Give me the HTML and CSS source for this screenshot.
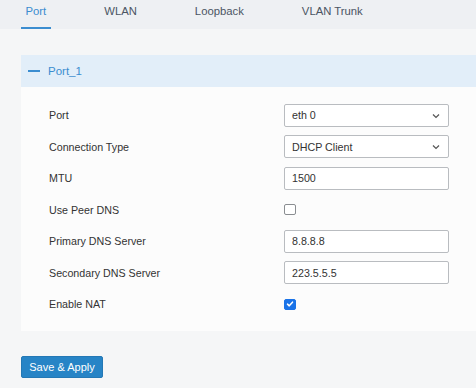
FILE: index.html
```html
<!DOCTYPE html>
<html>
<head>
<meta charset="utf-8">
<link rel="stylesheet" href="styles.css">
</head>
<body>
<nav class="tabs">
  <a class="tab active">Port</a>
  <a class="tab">WLAN</a>
  <a class="tab">Loopback</a>
  <a class="tab">VLAN Trunk</a>
</nav>
<main class="content">
  <section class="panel">
    <header class="panel-head">
      <span class="minus"></span>
      <span class="panel-title">Port_1</span>
    </header>
    <div class="panel-body">
      <div class="row">
        <label class="label">Port</label>
        <div class="field select">
          <span class="value">eth 0</span>
          <svg class="chev" width="8" height="6" viewBox="0 0 8 6"><path d="M1 1.5 L4 4.5 L7 1.5" fill="none" stroke="#555" stroke-width="1.2"/></svg>
        </div>
      </div>
      <div class="row">
        <label class="label">Connection Type</label>
        <div class="field select">
          <span class="value">DHCP Client</span>
          <svg class="chev" width="8" height="6" viewBox="0 0 8 6"><path d="M1 1.5 L4 4.5 L7 1.5" fill="none" stroke="#555" stroke-width="1.2"/></svg>
        </div>
      </div>
      <div class="row">
        <label class="label">MTU</label>
        <div class="field"><span class="value">1500</span></div>
      </div>
      <div class="row">
        <label class="label">Use Peer DNS</label>
        <span class="check"></span>
      </div>
      <div class="row">
        <label class="label">Primary DNS Server</label>
        <div class="field"><span class="value">8.8.8.8</span></div>
      </div>
      <div class="row">
        <label class="label">Secondary DNS Server</label>
        <div class="field"><span class="value">223.5.5.5</span></div>
      </div>
      <div class="row">
        <label class="label">Enable NAT</label>
        <span class="check checked"><svg width="12" height="12" viewBox="0 0 12 12"><path d="M3 6.2 L5.1 8.2 L9 3.8" fill="none" stroke="#fff" stroke-width="1.8" stroke-linecap="round" stroke-linejoin="round"/></svg></span>
      </div>
    </div>
  </section>
  <button class="btn">Save &amp; Apply</button>
</main>
</body>
</html>
```

FILE: styles.css
```css
* { box-sizing: border-box; }
html, body {
  margin: 0;
  padding: 0;
  background: #f5f6f7;
  font-family: "Liberation Sans", Arial, sans-serif;
  color: #333;
  overflow: hidden;
}
.tabs {
  display: flex;
  gap: 49px;
  height: 29px;
  padding-left: 21px;
  background: #eef0f3;
}
.tab {
  display: block;
  padding: 4px 4.5px 0;
  font-size: 11.3px;
  line-height: 15px;
  color: #4b5563;
  border-bottom: 2px solid transparent;
}
.tab.active {
  color: #3b8dd0;
  border-bottom-color: #3b8dd0;
}
.content {
  padding: 26px 0 0 21px;
}
.panel {
  background: #fcfcfc;
  margin-right: -10px;
}
.panel-head {
  display: flex;
  align-items: center;
  height: 32px;
  padding-left: 7px;
  background: #e2eef9;
}
.minus {
  width: 12px;
  height: 2px;
  background: #3b8dd0;
  margin-right: 8px;
}
.panel-title {
  font-size: 11.5px;
  color: #3b8dd0;
}
.panel-body {
  padding: 12.5px 0 11px 28px;
}
.row {
  display: grid;
  grid-template-columns: 235px 165px;
  align-items: center;
  height: 31.5px;
}
.label {
  font-size: 10.7px;
  color: #333;
}
.field {
  position: relative;
  height: 23px;
  border: 1px solid #b9bcc0;
  border-radius: 2px;
  background: #fff;
  display: flex;
  align-items: center;
  padding-left: 7px;
  font-size: 10.7px;
  color: #333;
}
.chev {
  position: absolute;
  right: 8px;
  top: 8px;
}
.check {
  width: 12px;
  height: 11px;
  border: 1px solid #8a8d91;
  border-radius: 2px;
  background: #fff;
}
.check.checked {
  border-color: #1a73e8;
  background: #1a73e8;
  display: flex;
  align-items: center;
  justify-content: center;
}
.check.checked svg { display: block; }
.btn {
  display: block;
  margin-top: 25px;
  width: 82px;
  height: 22px;
  padding: 0;
  border: 1px solid #2478b5;
  border-radius: 2px;
  background: #2784c6;
  color: #fff;
  font-family: "Liberation Sans", Arial, sans-serif;
  font-size: 11px;
}
```
